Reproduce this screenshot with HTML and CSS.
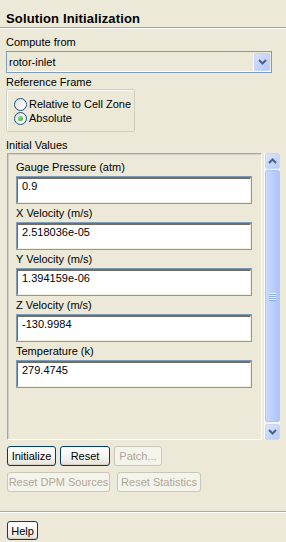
FILE: index.html
```html
<!DOCTYPE html>
<html lang="en">
<head>
  <meta charset="UTF-8">
  <title>Solution Initialization</title>
  <link rel="stylesheet" href="styles.css">
</head>
<body>
  <!-- header -->
  <div class="title">Solution Initialization</div>
  <div class="sep"></div>

  <div class="content">
    <div class="label first">Compute from</div>
    <div class="combo">
      <span class="combo-text">rotor-inlet</span>
      <span class="combo-btn">
        <svg width="9" height="6" viewBox="0 0 9 6"><polyline points="1,1 4.5,4.5 8,1" fill="none" stroke="#4d6185" stroke-width="2"/></svg>
      </span>
    </div>

    <div class="label">Reference Frame</div>
    <div class="group">
      <label class="radio"><span class="dot"></span>Relative to Cell Zone</label>
      <label class="radio"><span class="dot on"></span>Absolute</label>
    </div>

    <div class="label label-iv">Initial Values</div>
    <div class="values-row">
      <div class="values">
        <div class="field">
          <div class="field-label">Gauge Pressure (atm)</div>
          <div class="input"><div class="input-inner">0.9</div></div>
        </div>
        <div class="field">
          <div class="field-label">X Velocity (m/s)</div>
          <div class="input"><div class="input-inner">2.518036e-05</div></div>
        </div>
        <div class="field">
          <div class="field-label">Y Velocity (m/s)</div>
          <div class="input"><div class="input-inner">1.394159e-06</div></div>
        </div>
        <div class="field">
          <div class="field-label">Z Velocity (m/s)</div>
          <div class="input"><div class="input-inner">-130.9984</div></div>
        </div>
        <div class="field">
          <div class="field-label">Temperature (k)</div>
          <div class="input"><div class="input-inner">279.4745</div></div>
        </div>
      </div>

      <!-- scrollbar -->
      <div class="scrollbar">
        <div class="sb-btn">
          <svg width="9" height="6" viewBox="0 0 9 6"><polyline points="1,5 4.5,1.5 8,5" fill="none" stroke="#4d6185" stroke-width="2"/></svg>
        </div>
        <div class="sb-thumb">
          <div class="grip"><i></i><i></i><i></i><i></i></div>
        </div>
        <div class="sb-btn">
          <svg width="9" height="6" viewBox="0 0 9 6"><polyline points="1,1 4.5,4.5 8,1" fill="none" stroke="#4d6185" stroke-width="2"/></svg>
        </div>
      </div>
    </div>

    <div class="btn-row row1">
      <button class="btn w-init">Initialize</button>
      <button class="btn w-reset">Reset</button>
      <button class="btn w-patch" disabled>Patch...</button>
    </div>
    <div class="btn-row row2">
      <button class="btn w-dpm" disabled>Reset DPM Sources</button>
      <button class="btn w-stat" disabled>Reset Statistics</button>
    </div>
  </div>

  <div class="sep sep-bottom"></div>
  <div class="content">
    <button class="btn w-help">Help</button>
  </div>
</body>
</html>
```

FILE: styles.css
```css
/* base */
* {
  margin: 0;
  padding: 0;
  box-sizing: border-box;
}

body {
  width: 286px;
  height: 542px;
  overflow: hidden;
  background-color: #ece9d8;
  font-family: "Liberation Sans", Arial, sans-serif;
  font-size: 11px;
  color: #000;
}

.title {
  height: 27px;
  padding: 11px 0 0 6px;
  font-size: 13px;
  font-weight: bold;
  line-height: 16px;
  letter-spacing: 0.15px;
}

.sep {
  border-top: 1px solid #aca899;
  border-bottom: 1px solid #fff;
}

.content {
  padding: 0 6px;
}

.label {
  line-height: 13px;
  margin-top: 3px;
}

.label.first {
  margin: 7px 0 2px;
}

.label-iv {
  margin: 7px 0 1px;
}

/* combo box */
.combo {
  width: 266px;
  height: 22px;
  border: 1px solid #7f9db9;
  display: flex;
  align-items: center;
  justify-content: space-between;
  padding-right: 1px;
  box-shadow: inset 0 -1px #fff;
}

.combo-text {
  padding-left: 2px;
  line-height: 13px;
}

.combo-btn {
  width: 16px;
  height: 18px;
  border: 1px solid #c3d3fd;
  border-radius: 2px;
  background: linear-gradient(135deg, #d6e2fe, #b4c9f8);
  display: flex;
  align-items: center;
  justify-content: center;
  box-shadow: -1px 0 #fff;
}

/* reference frame group */
.group {
  width: fit-content;
  min-width: 126px;
  height: 43px;
  border: 1px solid #d0d0bf;
  border-radius: 2px;
  box-shadow: inset 1px 1px #fff;
  padding: 7px 3px 0 7px;
}

.radio {
  display: flex;
  align-items: center;
  height: 14px;
  gap: 2px;
  white-space: nowrap;
}

.dot {
  flex: none;
  width: 13px;
  height: 13px;
  border: 1px solid #1c5180;
  border-radius: 50%;
  background: linear-gradient(135deg, #dcdcd7, #fff 80%);
  display: flex;
  align-items: center;
  justify-content: center;
}

.dot.on::after {
  content: "";
  width: 5px;
  height: 5px;
  border-radius: 50%;
  background: radial-gradient(circle at 35% 35%, #8ee38b, #21a121);
}

/* initial values panel */
.values-row {
  display: flex;
  gap: 2px;
  height: 287px;
  margin-left: 1px;
}

.values {
  width: 255px;
  border: 1px solid;
  border-color: #aca899 #fff #fff #aca899;
  box-shadow: inset 1px 1px #d4d0c8;
  padding: 7px 0 0 8px;
}

.field {
  margin-bottom: 3px;
}

.field-label {
  line-height: 13px;
  margin-bottom: 2px;
}

.input {
  width: 236px;
  height: 28px;
  border: 1px solid #7f9db9;
  background-color: #fff;
}

.input-inner {
  height: 100%;
  border: 1px solid;
  border-color: #716f64 #f1efe2 #f1efe2 #716f64;
  border-top-width: 2px;
  padding: 1px 4px 0;
  line-height: 13px;
}

/* scrollbar */
.scrollbar {
  width: 16px;
  display: flex;
  flex-direction: column;
  background-color: #f6f5f0;
  border-left: 1px solid #fff;
}

.sb-btn {
  height: 16px;
  border: 1px solid #c8d6fc;
  border-radius: 2px;
  background: linear-gradient(135deg, #dbe5fe, #b7cbf9);
  display: flex;
  align-items: center;
  justify-content: center;
}

.sb-thumb {
  flex: 1;
  margin: 1px 0 2px;
  border: 1px solid #b3c7f6;
  border-radius: 2px;
  background: linear-gradient(90deg, #cad9fd, #b9cdfb 60%, #afc5f8);
  display: flex;
  align-items: center;
  justify-content: center;
}

.grip {
  display: flex;
  flex-direction: column;
  gap: 1px;
}

.grip i {
  display: block;
  width: 7px;
  height: 1px;
  background-color: #eef3ff;
  box-shadow: 0 1px #8caaf0;
}

/* buttons */
.btn-row {
  display: flex;
  margin-left: 1px;
}

.row1 {
  margin-top: 6px;
  gap: 4px;
}

.row2 {
  margin-top: 6px;
  gap: 7px;
}

.btn {
  height: 20px;
  padding: 0;
  border: 1px solid #003c74;
  border-radius: 3px;
  background: linear-gradient(#fff, #f4f3ee 60%, #e6e3d6);
  font-family: "Liberation Sans", Arial, sans-serif;
  font-size: 11px;
  color: #000;
  white-space: nowrap;
  box-shadow: inset 0 -1px #d6d0c5;
}

.btn:disabled {
  border-color: #c9c7ba;
  background: #f5f4ea;
  color: #aca899;
  box-shadow: none;
}

.w-init { width: 49px; }
.w-reset { width: 50px; }
.w-patch { width: 48px; }
.w-dpm { width: 103px; }
.w-stat { width: 84px; }

.sep-bottom {
  margin-top: 19px;
}

.w-help {
  width: 31px;
  height: 19px;
  margin: 8px 0 0 1px;
}
```
